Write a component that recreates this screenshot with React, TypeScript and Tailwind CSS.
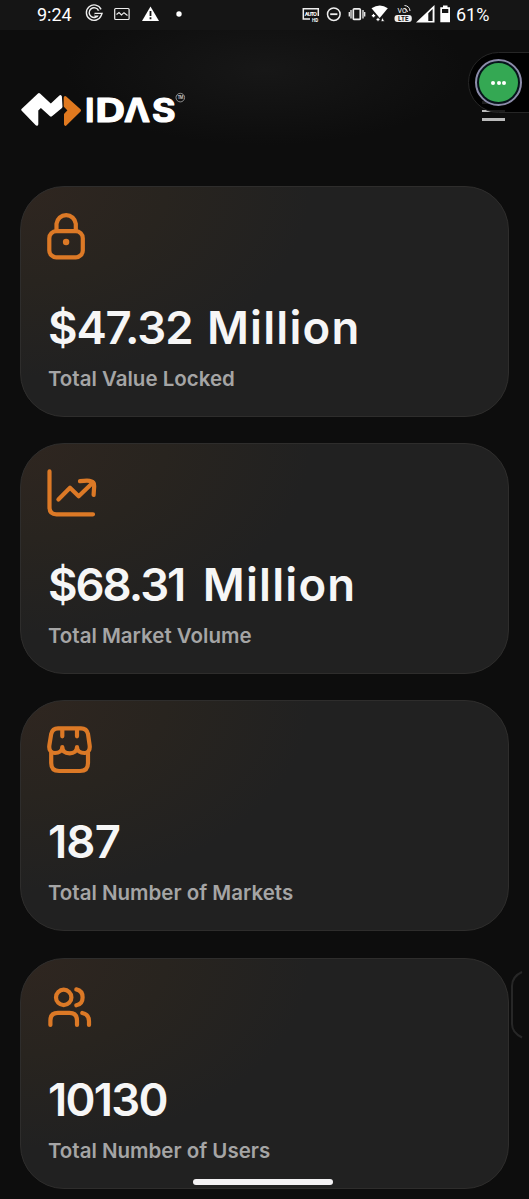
import type { ReactNode } from "react";

type Stat = { icon: ReactNode; value: ReactNode; label: string };

const stroke = {
  fill: "none",
  stroke: "#dc7926",
  strokeWidth: 4.2,
  strokeLinecap: "round" as const,
  strokeLinejoin: "round" as const,
};

function StatIcon({ children }: { children: ReactNode }) {
  return (
    <svg className="block h-[50px] w-[52px]" viewBox="0 0 52 50" {...stroke}>
      {children}
    </svg>
  );
}

const stats: Stat[] = [
  {
    icon: (
      <StatIcon>
        <rect x="2.3" y="19.2" width="33.5" height="26.2" rx="7" />
        <path d="M9.5 19V11.8a9.7 9.7 0 0 1 19.3 0V19" />
        <circle cx="19.1" cy="30" r="3.2" fill="#dc7926" stroke="none" />
      </StatIcon>
    ),
    value: (
      <>
        <span className="tracking-[-1.1px]">$47.32</span>
        <span className="ml-[14.5px] tracking-[1.2px]">Million</span>
      </>
    ),
    label: "Total Value Locked",
  },
  {
    icon: (
      <StatIcon>
        <path d="M2.5 2.4V38.3Q2.5 45.3 9.5 45.3H46" />
        <path d="M11.4 30.5L23 18.7L31.7 27.2L46 13.4" />
        <path d="M33 12.2C39 11.4 47.8 10.4 47.2 17L46.6 26" />
      </StatIcon>
    ),
    value: (
      <>
        <span className="tracking-[-2px]">$68.31</span>
        <span className="ml-[18.5px] tracking-[1.2px]">Million</span>
      </>
    ),
    label: "Total Market Volume",
  },
  {
    icon: (
      <StatIcon>
        <path d="M4.2 27V37Q4.2 45 12.2 45H33Q41 45 41 37V27" />
        <path d="M11 2.4H34C38 2.4 40.2 4.5 41 8L42.6 19C43.4 24 41 27 37.5 27C33 27 30 24.5 30 21C30 25 27 27.3 22.7 27.3C18 27.3 15.3 25 15.3 21C15.3 24.5 12 27 8 27C4 27 1.6 24 2.4 19L4.2 8C5 4.5 7.2 2.4 11 2.4Z" />
        <path d="M15.3 3V10.3M30 3V10.3" />
      </StatIcon>
    ),
    value: <span className="tracking-[-0.8px]">187</span>,
    label: "Total Number of Markets",
  },
  {
    icon: (
      <StatIcon>
        <circle cx="16.7" cy="13.4" r="7.7" />
        <path d="M29.3 5.4C33.5 6.3 35.6 9.5 35.6 13.4S33.5 20.4 29.3 21.3" />
        <path d="M3.4 41V36.5Q3.4 28.9 11 28.9H22.4Q30 28.9 30 36.5V41" />
        <path d="M35.3 29C39.5 29.8 42 32.7 42 37V41" />
      </StatIcon>
    ),
    value: <span className="tracking-[-1.7px]">10130</span>,
    label: "Total Number of Users",
  },
];

function StatusBar() {
  return (
    <header className="flex h-[30px] shrink-0 items-center bg-[#151515] pl-[37px] font-['Roboto',sans-serif] text-[18px] leading-[30px] text-white">
      <span className="w-[48px]">9:24</span>
      <svg className="h-[30px] w-[215px]" viewBox="85 0 215 30" fill="none" stroke="#eee">
        <path d="M99.8 10A6.3 6.3 0 1 0 100 14.8H94.5" strokeWidth="4.2" />
        <path d="M99.8 10A6.3 6.3 0 1 0 100 14.8H94.5" stroke="#151515" strokeWidth="1.4" />
        <rect x="114.7" y="8.5" width="14.4" height="11" rx="1" strokeWidth="1.2" />
        <path d="M116.5 14.5L119 12.5L121.5 15L124 12.7L127.5 15.5" strokeWidth="1.1" />
        <path d="M150.5 6.5L159 21H142Z" fill="#fff" stroke="none" />
        <path d="M150.5 11V16M150.5 17.3V19.2" stroke="#151515" strokeWidth="1.8" />
        <circle cx="179" cy="14" r="2.7" fill="#fff" stroke="none" />
      </svg>
      <svg className="h-[30px] w-[156px]" viewBox="300 0 156 30" fill="none" stroke="#eee">
        <path d="M310 19H303.3V8.7H318.3V16" strokeWidth="1.5" />
        <text x="304.8" y="16" fontSize="5.6" fontWeight="700" fill="#fff" stroke="none" textLength="12">AUTO</text>
        <text x="312" y="21.5" fontSize="4.5" fontWeight="700" fill="#fff" stroke="none">HD</text>
        <circle cx="333.8" cy="14.2" r="6.3" strokeWidth="1.5" />
        <path d="M330.2 14.2H337.4" strokeWidth="1.8" />
        <rect x="353.3" y="8.8" width="7" height="10.6" rx="1" strokeWidth="1.7" />
        <path d="M351 10V18.5M363 10V18.5M349.3 12V16.5M364.7 12V16.5" strokeWidth="1.3" />
        <path d="M371.5 8.3Q380 2.8 387.8 8.3L379.7 18Z" fill="#fff" stroke="none" />
        <path d="M373.5 13.5L375.7 15.7L373.5 17.9L371.3 15.7ZM378 17.5L380 19.5L378 21.5L376 19.5ZM382.5 17.5L384.5 21.5H380.8Z" fill="#fff" stroke="#151515" strokeWidth=".7" />
        <text x="397.5" y="13.2" fontSize="7" fill="#fff" stroke="none">VO</text>
        <path d="M404 8.5A4 4 0 0 1 407.5 12M404.5 5.5A6 6 0 0 1 410 11" strokeWidth="1" />
        <rect x="394.5" y="15" width="17.3" height="7" rx="3" fill="#eee" stroke="none" />
        <text x="398" y="20.8" fontSize="6.3" fontWeight="700" fill="#151515" stroke="none" textLength="10.5">LTE</text>
        <path d="M416 22.5L434.5 5V22.5Z" fill="#fff" stroke="none" />
        <path d="M428.3 13.3L432.6 9V21H428.3Z" fill="#151515" stroke="none" />
        <path d="M443 5.5H447.5V7.3H450V22.3H440.3V7.3H443Z" fill="#fff" stroke="none" />
        <rect x="442" y="9" width="6.3" height="4" fill="#151515" stroke="none" />
      </svg>
      <span>61%</span>
    </header>
  );
}

function Logo() {
  return (
    <div className="flex h-[54px] items-center">
      <svg className="block h-[54px] w-[61px]" viewBox="21 82 61 54" strokeLinejoin="round" strokeWidth="3">
        <path d="M22.8 109.8L39 94.6L50.8 105.6L60.4 96.7L61 106.8L51 115.2L40.8 106L36.8 109.8V124.2Z" fill="#fff" stroke="#fff" />
        <path d="M65.2 97.6L79.5 110.4L65.5 124.3V114.5L69.5 110.4L65.2 106Z" fill="#e0791f" stroke="#e0791f" />
      </svg>
      <svg className="block h-[54px] w-[110px]" viewBox="82 82 110 54" fill="#fff">
        <g fontFamily="Inter, sans-serif" fontWeight="700" fontSize="32" stroke="#fff" strokeWidth="1.2" strokeLinejoin="round">
          <text x="85.2" y="122.3">I</text>
          <text x="95.5" y="122.3" textLength="29.5" lengthAdjust="spacingAndGlyphs">D</text>
          <text x="124" y="122.3" textLength="26" lengthAdjust="spacingAndGlyphs">Λ</text>
          <text x="152" y="122.3" textLength="23.5" lengthAdjust="spacingAndGlyphs">S</text>
        </g>
        <circle cx="180.3" cy="97.6" r="4.3" fill="none" stroke="#aaa" strokeWidth=".8" />
        <text x="177.4" y="99.2" fontFamily="Inter, sans-serif" fontWeight="600" fontSize="4.2" textLength="6" fill="#ccc">TM</text>
      </svg>
    </div>
  );
}

function StatCard({ icon, value, label }: Stat) {
  return (
    <section className="h-[231px] shrink-0 rounded-[44px] border border-[#2e2d2c] bg-[#212121] bg-[radial-gradient(ellipse_290px_190px_at_0%_0%,#2f2620_0%,#28241f_50%,#212121_100%)] pt-[25px] pl-[26px]">
      {icon}
      <div className="mt-[38px] flex h-[56px] items-center pl-[0.5px] font-['Inter',sans-serif] text-[45.5px] leading-[56px] font-semibold whitespace-nowrap text-[#f6f6f6]">
        {value}
      </div>
      <p className="mt-[8px] pl-[0.5px] font-['Inter',sans-serif] text-[20.5px] leading-[30px] font-[560] whitespace-nowrap text-[#a5a5a5]">{label}</p>
    </section>
  );
}

export default function App() {
  return (
    <div className="relative flex h-[1199px] w-[529px] flex-col overflow-hidden bg-[#0d0d0d]">
      <StatusBar />
      <div className="flex h-[156px] shrink-0 items-start justify-between bg-[radial-gradient(ellipse_200px_75px_at_265px_40px,#171717,#0d0d0d)] pt-[52px] pr-[24px] pl-[21px]">
        <Logo />
        <button aria-label="Menu" className="mt-[19px] flex flex-col gap-[6px]">
          <span className="h-[2.5px] w-[23px] bg-[#bbb]" />
          <span className="h-[2.5px] w-[23px] bg-[#bbb]" />
          <span className="h-[2.5px] w-[23px] bg-[#bbb]" />
        </button>
      </div>
      <main className="flex flex-col gap-[26.2px] pr-[20px] pl-[20.4px]">
        {stats.map((s) => (
          <StatCard key={s.label} {...s} />
        ))}
      </main>

      <div className="absolute top-[52px] right-[-1px] flex h-[61px] w-[62px] items-center rounded-l-[31px] border border-[#262626] bg-black/85 pl-[6px]">
        <div className="flex h-[47px] w-[47px] shrink-0 items-center justify-center rounded-full border-2 border-[#8c8caa] bg-[#06141a]">
          <div className="flex h-[39px] w-[39px] items-center justify-center gap-[1.5px] rounded-full bg-[#34a853]">
            <i className="h-[4px] w-[4px] rounded-full bg-white" />
            <i className="h-[4px] w-[4px] rounded-full bg-white" />
            <i className="h-[4px] w-[4px] rounded-full bg-white" />
          </div>
        </div>
      </div>

      <svg className="absolute top-[968px] left-[508px] h-[74px] w-[18px]" viewBox="508 968 18 74" fill="none" stroke="#272727" strokeWidth="2">
        <path d="M522 972Q512 976.5 512 986V1024Q512 1032.5 522 1037.5" />
      </svg>
      <div className="absolute top-[1179px] left-[193px] h-[6px] w-[140px] rounded-full bg-[#f4f2f4]" />
    </div>
  );
}
